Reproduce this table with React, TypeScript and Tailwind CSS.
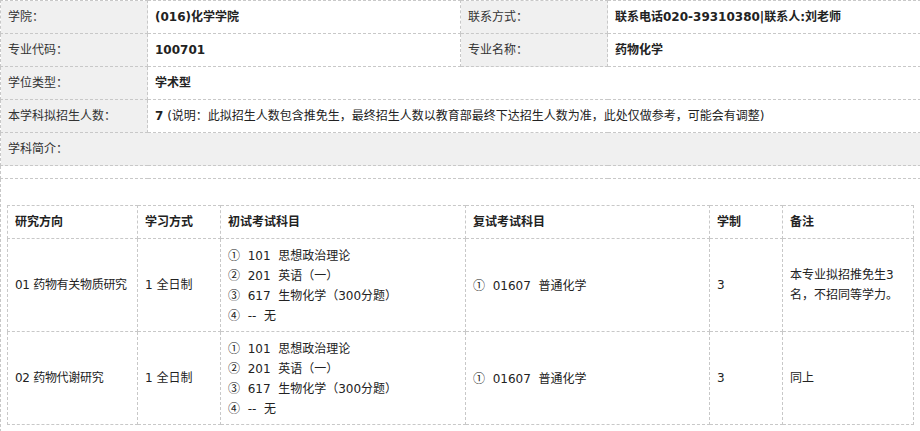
const font = '[font-family:"DejaVu_Sans","Noto_Sans_CJK_SC",sans-serif]';

const subjects = ['101  思想政治理论', '201  英语（一）', '617  生物化学（300分题）', '--  无'];
const marks = ['①', '②', '③', '④'];

const directions = [
  { name: '01 药物有关物质研究', note: '本专业拟招推免生3名，不招同等学力。' },
  { name: '02 药物代谢研究', note: '同上' },
];

const cell = 'border border-dashed border-[#c8c8c8] px-[7px] align-middle';
const label = `${cell} bg-[#f0f0f0] text-[#333]`;
const cjk = '[font-family:"Noto_Sans_CJK_SC",sans-serif]';

export default function App() {
  return (
    <div className={`w-[920px] bg-white text-[12px] text-[#222] ${font}`}>
      <table className="w-[920px] table-fixed border-collapse">
        <colgroup>
          <col className="w-[147px]" />
          <col className="w-[313px]" />
          <col className="w-[147px]" />
          <col className="w-[313px]" />
        </colgroup>
        <tbody>
          <tr className="h-[33px]">
            <td className={label}>学院：</td>
            <td className={`${cell} font-bold`}>(016)化学学院</td>
            <td className={label}>联系方式：</td>
            <td className={`${cell} font-bold`}>联系电话020-39310380|联系人:刘老师</td>
          </tr>
          <tr className="h-[33px]">
            <td className={label}>专业代码：</td>
            <td className={`${cell} font-bold`}>100701</td>
            <td className={label}>专业名称：</td>
            <td className={`${cell} font-bold`}>药物化学</td>
          </tr>
          <tr className="h-[33px]">
            <td className={label}>学位类型：</td>
            <td colSpan={3} className={`${cell} font-bold`}>学术型</td>
          </tr>
          <tr className="h-[33px]">
            <td className={label}>本学科拟招生人数：</td>
            <td colSpan={3} className={`${cell} whitespace-nowrap`}>
              <b>7</b> (说明：此拟招生人数包含推免生，最终招生人数以教育部最终下达招生人数为准，此处仅做参考，可能会有调整)
            </td>
          </tr>
          <tr className="h-[33px]">
            <td colSpan={4} className={label}>学科简介：</td>
          </tr>
          <tr className="h-[13px]">
            <td colSpan={4} className={cell}></td>
          </tr>
          <tr>
            <td colSpan={4} className="border border-dashed border-[#c8c8c8] pl-[6px] pr-[6px] pt-[26px] pb-[6px]">
              <table className="w-full table-fixed border-collapse">
                <colgroup>
                  <col className="w-[130px]" />
                  <col className="w-[83px]" />
                  <col className="w-[245px]" />
                  <col className="w-[244px]" />
                  <col className="w-[73px]" />
                  <col />
                </colgroup>
                <thead>
                  <tr className="h-[33px] font-bold text-left">
                    <th className={cell}>研究方向</th>
                    <th className={cell}>学习方式</th>
                    <th className={cell}>初试考试科目</th>
                    <th className={cell}>复试考试科目</th>
                    <th className={cell}>学制</th>
                    <th className={cell}>备注</th>
                  </tr>
                </thead>
                <tbody>
                  {directions.map((d) => (
                    <tr key={d.name} className="h-[93px]">
                      <td className={`${cell} whitespace-nowrap tracking-[-0.3px]`}>{d.name}</td>
                      <td className={cell}>1 全日制</td>
                      <td className={cell}>
                        {subjects.map((s, i) => (
                          <div key={s} className="h-[20px] leading-[20px] whitespace-pre">
                            <span className={cjk}>{marks[i]}</span>{'  '}{s}
                          </div>
                        ))}
                      </td>
                      <td className={`${cell} whitespace-pre`}>
                        <span className={cjk}>①</span>{'  '}01607  普通化学
                      </td>
                      <td className={cell}>3</td>
                      <td className={`${cell} leading-[20px]`}>{d.note}</td>
                    </tr>
                  ))}
                </tbody>
              </table>
            </td>
          </tr>
        </tbody>
      </table>
    </div>
  );
}
